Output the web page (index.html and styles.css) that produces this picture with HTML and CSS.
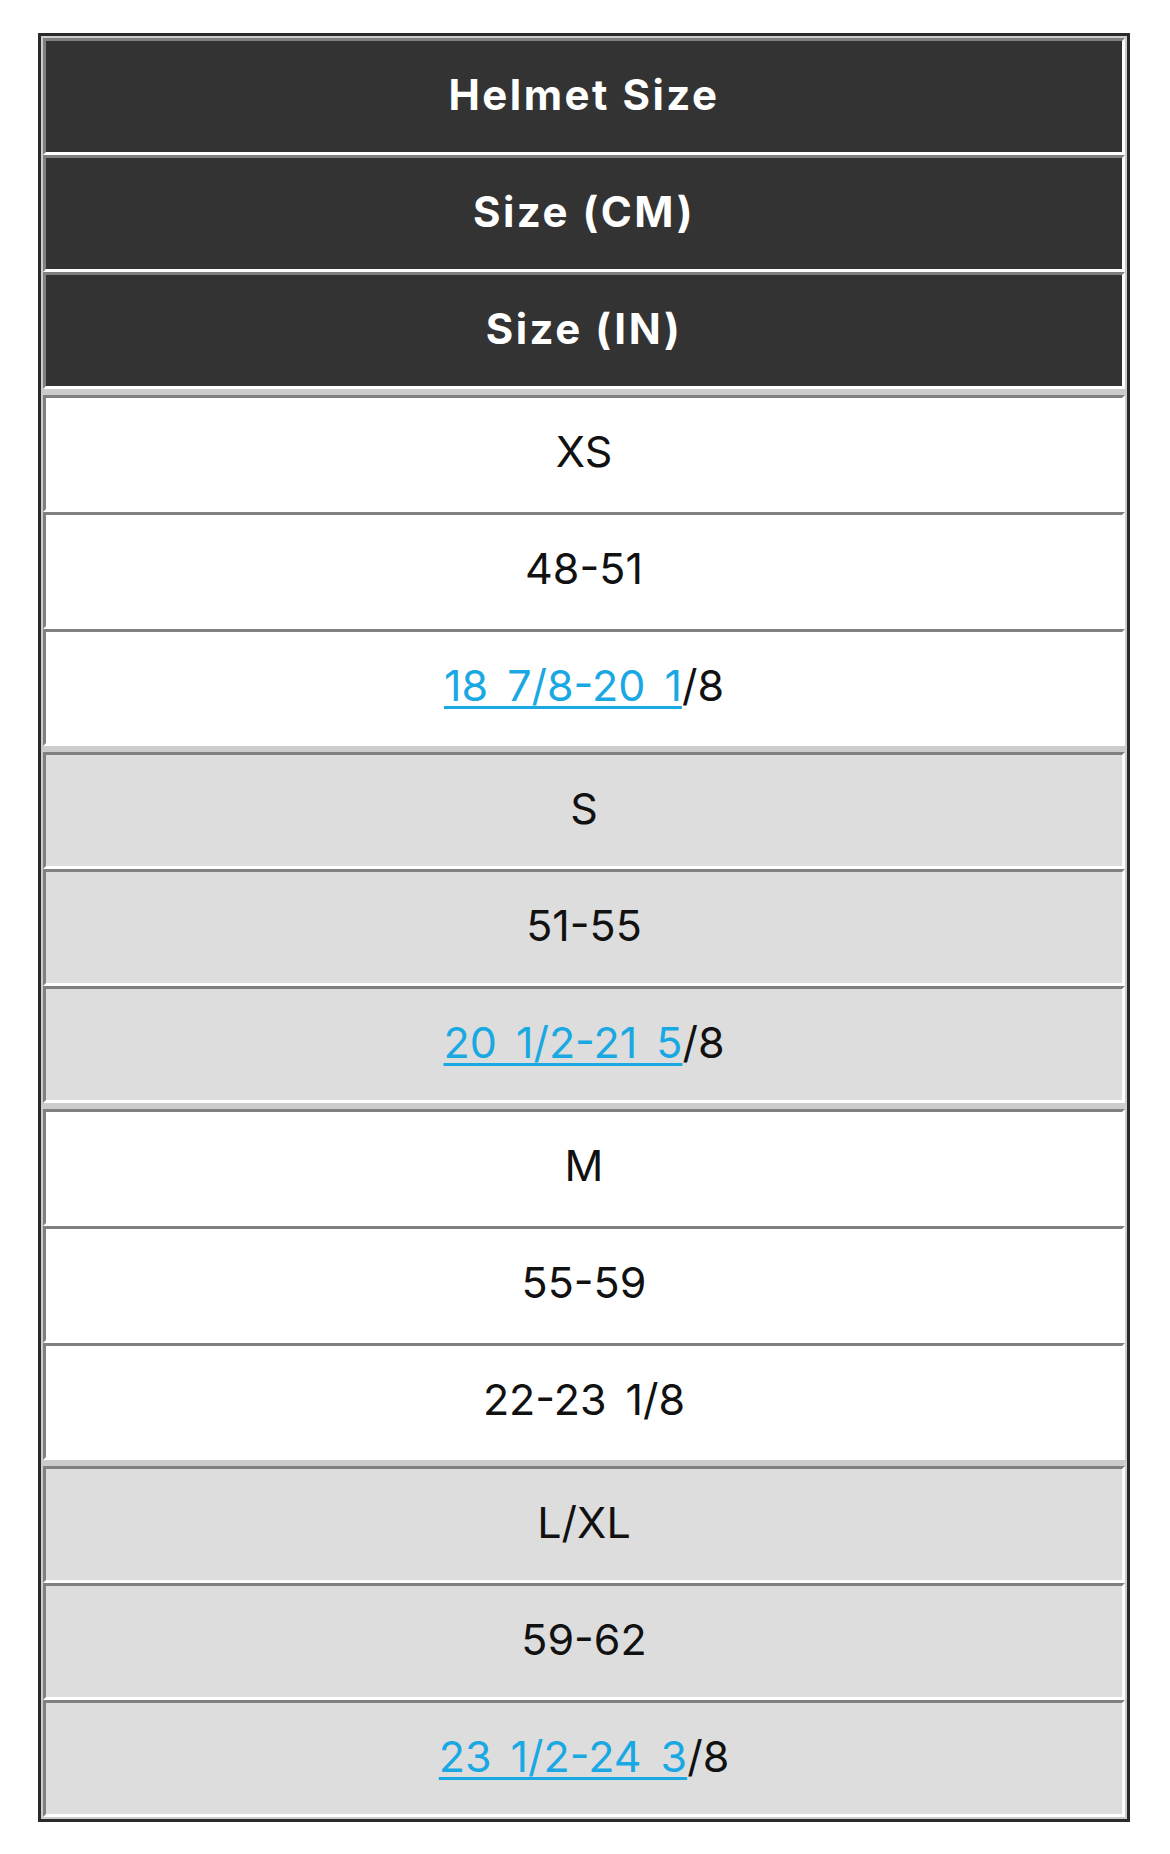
FILE: index.html
```html
<!DOCTYPE html>
<html lang="en">
<head>
<meta charset="utf-8">
<title>Helmet Size</title>
<link rel="stylesheet" href="styles.css">
</head>
<body>
<div class="size-table">
  <div class="group group-head">
    <div class="cell">Helmet Size</div>
    <div class="cell">Size (CM)</div>
    <div class="cell">Size (IN)</div>
  </div>
  <div class="group group-white">
    <div class="cell">XS</div>
    <div class="cell">48-51</div>
    <div class="cell"><a href="#" class="link">18 7/8-20 1</a>/8</div>
  </div>
  <div class="group group-gray">
    <div class="cell">S</div>
    <div class="cell">51-55</div>
    <div class="cell"><a href="#" class="link">20 1/2-21 5</a>/8</div>
  </div>
  <div class="group group-white">
    <div class="cell">M</div>
    <div class="cell">55-59</div>
    <div class="cell">22-23 1/8</div>
  </div>
  <div class="group group-gray">
    <div class="cell">L/XL</div>
    <div class="cell">59-62</div>
    <div class="cell"><a href="#" class="link">23 1/2-24 3</a>/8</div>
  </div>
</div>
</body>
</html>
```
FILE: styles.css
```css
html, body {
  margin: 0;
  padding: 0;
  background: #ffffff;
}

body {
  font-family: Inter, "Noto Sans", sans-serif;
  color: #111111;
}

.size-table {
  box-sizing: border-box;
  width: 1092px;
  margin: 33px 0 0 38px;
  border: 3px solid #2a2a2a;
  background: #cccccc;
  padding: 2px;
  display: flex;
  flex-direction: column;
  gap: 6px;
}

.group {
  display: flex;
  flex-direction: column;
}

.cell {
  box-sizing: border-box;
  height: 117px;
  border-style: solid;
  border-width: 3px;
  border-color: #808080 #ffffff #ffffff #808080;
  display: flex;
  align-items: center;
  justify-content: center;
  font-size: 43px;
  line-height: 1;
  word-spacing: 7px;
  padding-bottom: 4px;
}

.group-head .cell {
  background: #333333;
  color: #ffffff;
  font-size: 42px;
  font-weight: 700;
  letter-spacing: 2.5px;
  word-spacing: 0;
}

.group-white .cell {
  background: #ffffff;
}

.group-gray .cell {
  background: #dddddd;
}

.link {
  color: #1aa8e2;
  text-decoration: underline;
  text-decoration-thickness: 3px;
  text-underline-offset: 5px;
}
```
